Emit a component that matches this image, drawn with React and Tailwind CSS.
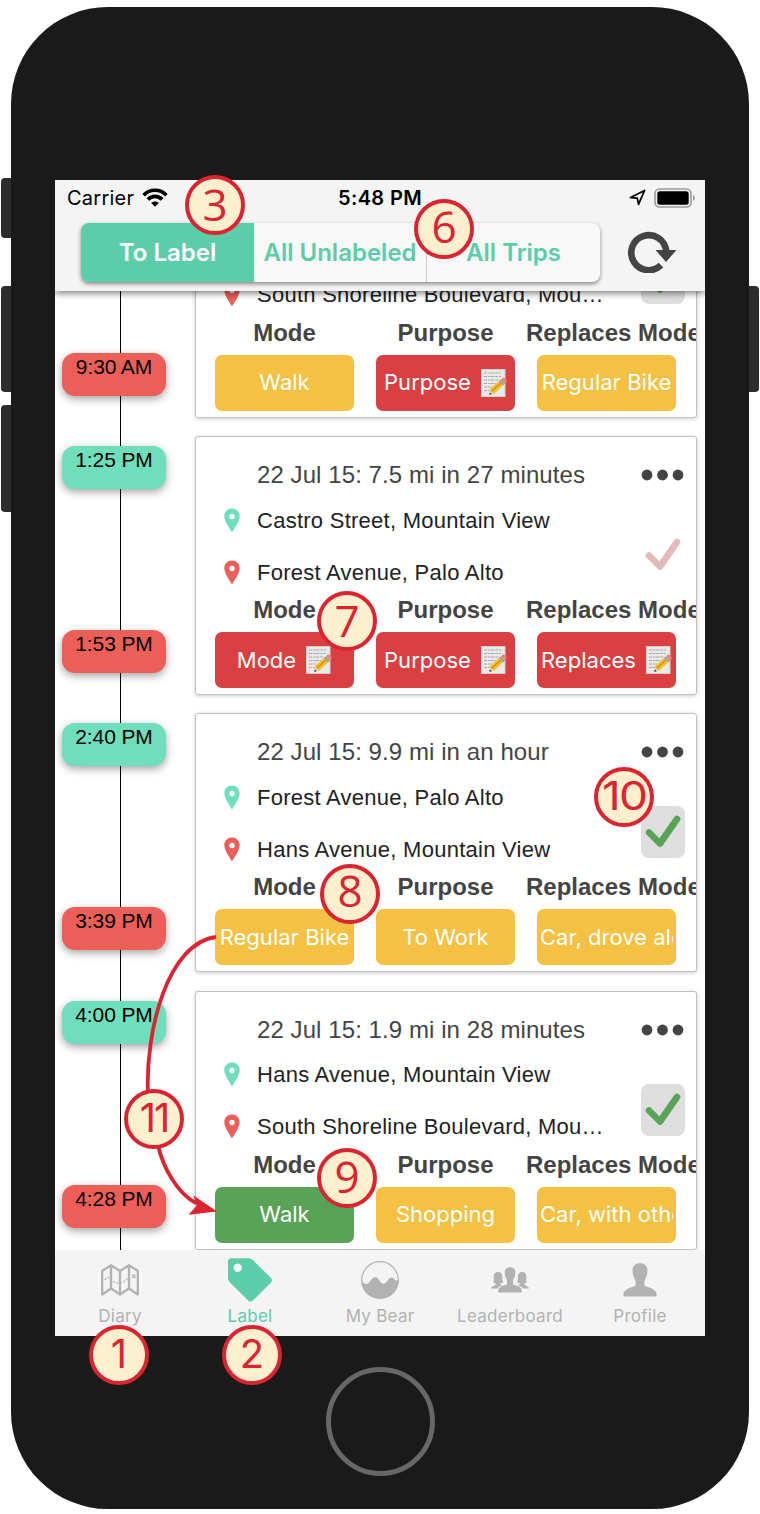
import React from "react";

const TONES = {
  yellow: "bg-[#f5c143]",
  red: "bg-[#da4042]",
  green: "bg-[#58a355]",
};

const TRIPS = [
  {
    title: "22 Jul 15: 1.9 mi in 28 minutes",
    from: "Hans Avenue, Mountain View",
    to: "South Shoreline Boulevard, Mou…",
    start: "9:02 AM",
    end: "9:30 AM",
    verified: true,
    labels: [
      { text: "Walk", tone: "yellow" },
      { text: "Purpose", tone: "red", memo: true },
      { text: "Regular Bike", tone: "yellow" },
    ],
  },
  {
    title: "22 Jul 15: 7.5 mi in 27 minutes",
    from: "Castro Street, Mountain View",
    to: "Forest Avenue, Palo Alto",
    start: "1:25 PM",
    end: "1:53 PM",
    verified: false,
    labels: [
      { text: "Mode", tone: "red", memo: true },
      { text: "Purpose", tone: "red", memo: true },
      { text: "Replaces", tone: "red", memo: true },
    ],
  },
  {
    title: "22 Jul 15: 9.9 mi in an hour",
    from: "Forest Avenue, Palo Alto",
    to: "Hans Avenue, Mountain View",
    start: "2:40 PM",
    end: "3:39 PM",
    verified: true,
    labels: [
      { text: "Regular Bike", tone: "yellow" },
      { text: "To Work", tone: "yellow" },
      { text: "Car, drove alone", tone: "yellow" },
    ],
  },
  {
    title: "22 Jul 15: 1.9 mi in 28 minutes",
    from: "Hans Avenue, Mountain View",
    to: "South Shoreline Boulevard, Mou…",
    start: "4:00 PM",
    end: "4:28 PM",
    verified: true,
    labels: [
      { text: "Walk", tone: "green" },
      { text: "Shopping", tone: "yellow" },
      { text: "Car, with others", tone: "yellow" },
    ],
  },
];

function Memo() {
  return (
    <svg viewBox="0 0 26 28" className="h-7 w-[26px] shrink-0">
      <rect x="0.5" y="0.5" width="23.5" height="27" fill="#e9e9e9" stroke="#cfcfcf" />
      <g stroke="#a2a2a2" strokeWidth="0.9" strokeDasharray="3 .8 2 .6 4 .9">
        <path d="M3 4h17M3 7.5h17M3 11h15M3 14.500h12M3 18h8M3 21.500h6" />
      </g>
      <path d="M8 21l1.500 4.800 5-1.300z" fill="#edcf9d" />
      <path d="M8 25.800l1-2.300 1.700 1.800z" fill="#333" />
      <path d="M8.500 20.500L19 11l4 4.500-9.500 9z" fill="#f3c02f" />
      <path d="M10.500 22.500L21 13" stroke="#d18d16" strokeWidth="1.300" />
      <path d="M18 12l2-1.700 4 4.500-2 1.700z" fill="#9fa5ad" />
      <path d="M20 10.300l1.500-1.500q1-.8 2.200.2l1.500 1.700q1 1.300 0 2.300L24 14.800z" fill="#ee8379" />
    </svg>
  );
}

function Pin({ className }) {
  return (
    <svg viewBox="0 0 16 25" className={`h-[25px] w-4 shrink-0 ${className}`}>
      <path
        fill="currentColor"
        fillRule="evenodd"
        d="M8 0.500C3.600.500.300 3.700.300 8c0 5.200 4.500 11 7.700 16.500C11.200 19 15.700 13.200 15.700 8 15.700 3.700 12.400.500 8 .500zM8 5.800a2.700 2.700 0 1 1 0 5.400 2.700 2.700 0 0 1 0-5.400z"
      />
    </svg>
  );
}

function Address({ children, pin }) {
  return (
    <div className="flex h-[52px] items-center">
      <Pin className={pin} />
      <span className="ml-[17px] text-[22px] tracking-[0.260px] whitespace-nowrap text-[#222]">{children}</span>
    </div>
  );
}

function TripCard({ trip }) {
  return (
    <div className="flex h-[259px] w-[502px] flex-col overflow-hidden rounded-[3px] border border-[#c2c2c2] bg-white shadow-[0_1px_4px_rgba(0,0,0,0.2)]">
      <div className="flex h-[161px] shrink-0 pr-[11px] pl-[28px]">
        <div className="min-w-0 flex-1">
          <div className="mt-[21px] h-[36px] pl-[33px] text-2xl leading-[34px] tracking-[0.08px] whitespace-nowrap text-[#444]">
            {trip.title}
          </div>
          <Address pin="text-[#6edebd]">{trip.from}</Address>
          <Address pin="text-[#ec5f59]">{trip.to}</Address>
        </div>
        <div className="flex w-11 flex-col">
          <svg viewBox="0 0 44 12" className="mt-[32px] h-3 w-11" fill="#444">
            <circle cx="6" cy="6" r="5.400" />
            <circle cx="21.500" cy="6" r="5.400" />
            <circle cx="37" cy="6" r="5.400" />
          </svg>
          <div
            className={`mt-[48px] flex h-[52px] w-11 items-center justify-center rounded-[8px] ${
              trip.verified ? "bg-[#dedede] text-[#58a355]" : "text-[#e2baba]"
            }`}
          >
            <svg viewBox="0 0 44 52" className="h-[52px] w-11">
              <path
                d="M8 26.500l11 11L36 13"
                fill="none"
                stroke="currentColor"
                strokeWidth="6.600"
                strokeLinecap="round"
                strokeLinejoin="round"
              />
            </svg>
          </div>
        </div>
      </div>
      <div className="ml-[8px] flex w-[484px] shrink-0">
        {["Mode", "Purpose", "Replaces Mode"].map((name, i) => (
          <div key={name} className="w-[161px] shrink-0">
            <div className="h-[34px] text-center text-2xl leading-[24px] font-bold whitespace-nowrap text-[#444]">
              {name}
            </div>
            <div
              className={`mx-[11px] flex h-14 items-center overflow-hidden rounded-[7px] px-[3px] ${
                TONES[trip.labels[i].tone]
              }`}
            >
              <div className="w-full min-w-0 overflow-hidden">
                <div className="mx-auto flex w-fit items-center gap-[10px] font-['Inter',sans-serif] text-[22px] tracking-[0.020px] whitespace-nowrap text-white">
                  {trip.labels[i].text}
                  {trip.labels[i].memo && <Memo />}
                </div>
              </div>
            </div>
          </div>
        ))}
      </div>
    </div>
  );
}

function TimePill({ children, className }) {
  return (
    <div
      className={`relative h-[43px] w-[104px] rounded-[13px] text-center text-[21px] leading-[28px] tracking-[-0.100px] text-black shadow-[0_3px_8px_rgba(0,0,0,0.36)] ${className}`}
    >
      {children}
    </div>
  );
}

function TripRow({ trip }) {
  return (
    <div className="flex h-[277.400px] shrink-0">
      <div className="relative flex w-[140px] shrink-0 flex-col pl-[7px]">
        <div className="absolute top-0 bottom-0 left-[65px] w-px bg-black" />
        <TimePill className="mt-[10px] bg-[#6edebd]">{trip.start}</TimePill>
        <TimePill className="mt-[141px] bg-[#ec5f59]">{trip.end}</TimePill>
      </div>
      <TripCard trip={trip} />
    </div>
  );
}

function StatusBar() {
  return (
    <div className="grid h-[35px] grid-cols-[1fr_auto_1fr] items-center px-3 font-['Inter',sans-serif] text-[20px] text-black">
      <div className="flex items-center gap-[8px] tracking-[0.250px]">
        Carrier
        <svg viewBox="0 0 26 19" className="h-[19px] w-[26px]">
          <g fill="none" stroke="#000" strokeWidth="3.600">
            <path d="M1.600 7.200C8 .600 18 .600 24.400 7.200" />
            <path d="M5.900 11.500c4-4.200 10.200-4.200 14.200 0" />
          </g>
          <path d="M13 18.800l-3.800-3.900c2.200-2 5.400-2 7.600 0z" />
        </svg>
      </div>
      <div className="font-semibold tracking-[0.350px]">5:48 PM</div>
      <div className="flex items-center justify-end gap-2">
        <svg viewBox="0 0 17 17" className="h-[17px] w-[17px]">
          <path
            d="M1.500 8.600L15.600 1.400 9.500 15.400 8.300 9.100z"
            fill="none"
            stroke="#000"
            strokeWidth="1.700"
            strokeLinejoin="round"
          />
        </svg>
        <svg viewBox="0 0 42 20" className="-mr-[3px] h-5 w-[42px]">
          <rect x="1" y="1" width="36" height="18" rx="4.500" fill="none" stroke="#999" strokeWidth="1.600" />
          <rect x="3.300" y="3.200" width="31.400" height="13.600" rx="2.500" />
          <path d="M39 7v6c2.400-1 2.400-5 0-6z" fill="#999" />
        </svg>
      </div>
    </div>
  );
}

function FilterBar() {
  return (
    <div className="flex items-start pt-[8px] pl-[26px]">
      <div className="grid h-[59px] w-[519px] grid-cols-3 overflow-hidden rounded-[8px] bg-[#f8f8f8] font-['Inter',sans-serif] text-2xl font-semibold whitespace-nowrap text-[#5ccda9] shadow-[0_2px_4px_rgba(0,0,0,0.450)]">
        <div className="flex items-center justify-center bg-[#5ccda9] text-white">To Label</div>
        <div className="flex items-center justify-center border-r border-[#ccc]">
          All Unlabeled
        </div>
        <div className="flex items-center justify-center">All Trips</div>
      </div>
      <svg viewBox="0 0 50 44" className="mt-[6px] ml-[27px] h-11 w-[50px]">
        <path d="M34 36.200A17.500 17.500 0 1 1 39.200 22" fill="none" stroke="#444" strokeWidth="6.600" />
        <path d="M28.500 21H49.500L39 33z" fill="#444" />
      </svg>
    </div>
  );
}

function MapIcon() {
  return (
    <svg viewBox="0 0 38 34" className="h-[34px] w-[38px]" fill="none" stroke="#b2b2b2">
      <path
        d="M1.200 8L10 2.200 19 8l9-5.800L36.800 8v23.500L28 25.500l-9 6-9-6-8.800 6zM10 2.200v23.300M19 8v23.500M28 2.200v23.300"
        strokeWidth="2.300"
        strokeLinejoin="round"
      />
      <path d="M4 17c2-4 4-3 6-.5s5 4 9 3.500 6-3 9-6" strokeWidth="1.200" strokeDasharray="2 1.600" />
      <path d="M31 11.500l3.500 3.500M34.500 11.500L31 15" strokeWidth="1.200" />
    </svg>
  );
}

function TagIcon() {
  return (
    <svg viewBox="0 0 44 44" className="h-11 w-11">
      <path
        fill="#5ccda9"
        fillRule="evenodd"
        d="M3.500.200H20.500Q23 .200 24.800 2L43 20Q45 22.200 43 24.400L24.800 42.600Q22.500 44.800 20.200 42.600L1.700 24.300Q0 22.600 0 20.300V3.700Q0 .200 3.500.200zM9.700 5.600a4.200 4.200 0 1 0 0 8.400 4.200 4.200 0 0 0 0-8.400z"
      />
    </svg>
  );
}

function BearIcon() {
  return (
    <svg viewBox="0 0 38 38" className="h-[38px] w-[38px]">
      <circle cx="19" cy="19" r="18.300" fill="none" stroke="#b2b2b2" strokeWidth="1.200" />
      <path
        fill="#b2b2b2"
        d="M.800 19.500C2.500 23 6 24.500 8.500 21 10.500 18 12 16.200 14.500 16.200c3.500 0 4.500 6.500 8 6.500 3.500 0 4.500-6.300 8-6.300 3 0 3.500 4.300 6.800 2.800.500 10-7 18.300-18.300 18.300S.300 29.500.800 19.500z"
      />
    </svg>
  );
}

function PeopleIcon() {
  return (
    <svg viewBox="0 0 38 26" className="h-[26px] w-[38px]" fill="#b2b2b2">
      <path d="M19 .300c3.600 0 5.500 2.100 5.300 5.700-.1 3.400-1.300 5.200-2.300 7.400v4c4.200 1.100 8.700 2.500 8.700 6V25.500H7.300v-2.100c0-3.500 4.500-4.900 8.700-6v-4c-1-2.200-2.200-4-2.300-7.400C13.500 2.400 15.400.300 19 .300z" />
      <path d="M7 5c3.300 0 4.300 2.300 4.300 5.200 0 2.500.2 3.600.8 5.200-1.200.8-3.200.4-3.100 1.100.1 1.200 1.600 1.200 2.200 1.700-2.600.9-4 1.500-4.800 3.300H0c.3-2.800 4.300-2.600 5-4.500.4-1.100-1.800-.6-2.700-1.600.6-1.700.4-3 .4-5.200C2.700 7.300 3.700 5 7 5z" />
      <path d="M31.200 5c-3.300 0-4.300 2.300-4.300 5.200 0 2.500-.2 3.600-.8 5.200 1.200.8 3.200.4 3.100 1.100-.1 1.200-1.600 1.200-2.200 1.700 2.600.9 4 1.500 4.800 3.300h6.200c-.3-2.800-4.300-2.600-5-4.500-.4-1.100 1.800-.6 2.700-1.600-.6-1.700-.4-3-.4-5.200C35.500 7.300 34.500 5 31.200 5z" />
    </svg>
  );
}

function PersonIcon() {
  return (
    <svg viewBox="0 0 34 34" className="h-[34px] w-[34px]" fill="#b2b2b2">
      <path d="M17 .300C22 .300 24.700 3.200 24.500 8c-.1 4.500-1.700 7-3 10v5C27 24.500 33.500 26.800 33.500 31v2.500H.500V31C.500 26.800 7 24.500 12.500 23v-5C11.200 15 9.600 12.500 9.500 8 9.300 3.200 12 .300 17 .300z" />
    </svg>
  );
}

const NAV = [
  { name: "Diary", Icon: MapIcon },
  { name: "Label", Icon: TagIcon, active: true },
  { name: "My Bear", Icon: BearIcon },
  { name: "Leaderboard", Icon: PeopleIcon },
  { name: "Profile", Icon: PersonIcon },
];

function NavBar() {
  return (
    <div className="grid h-[86px] shrink-0 grid-cols-5 bg-[#f4f4f4] font-['Inter',sans-serif] text-[17px] tracking-[0.250px]">
      {NAV.map(({ name, Icon, active }) => (
        <div key={name} className={`flex flex-col items-center ${active ? "text-[#5ccda9]" : "text-[#b2b2b2]"}`}>
          <div className="flex h-[60px] items-center justify-center">
            <Icon />
          </div>
          <div className="-mt-[4px] leading-5 whitespace-nowrap">{name}</div>
        </div>
      ))}
    </div>
  );
}

const BIG = "font-['Open_Sans',sans-serif] text-[44px]";
const WIDE = "font-['Inter',sans-serif] text-[40px]";

const CALLOUTS = [
  { n: "3", spot: "left-[185px] top-[175px]", face: BIG, nudge: "-translate-y-px" },
  { n: "6", spot: "left-[414px] top-[199px]", face: BIG, nudge: "-translate-y-[3px]" },
  { n: "7", spot: "left-[317px] top-[591px]", face: BIG, nudge: "-translate-y-px" },
  { n: "10", spot: "left-[594px] top-[767px]", face: WIDE, nudge: "-translate-y-px scale-x-[1.150] tracking-[-1.500px]" },
  { n: "8", spot: "left-[320px] top-[864px]", face: BIG, nudge: "-translate-y-[4px]" },
  { n: "11", spot: "left-[124px] top-[1089px]", face: WIDE, nudge: "-translate-y-px tracking-[-2px]" },
  { n: "9", spot: "left-[317px] top-[1148px]", face: BIG, nudge: "-translate-y-[2px]" },
  { n: "1", spot: "left-[89px] top-[1325px]", face: WIDE, nudge: "-translate-y-px" },
  { n: "2", spot: "left-[222px] top-[1325px]", face: WIDE, nudge: "-translate-y-px" },
];

function Callouts() {
  return (
    <div className="pointer-events-none absolute inset-0 z-20">
      <svg viewBox="0 0 760 1514" className="absolute inset-0 h-full w-full">
        <path
          d="M216 937C168 943 145 1030 148 1095M158 1145C163 1168 178 1194 196 1203"
          fill="none"
          stroke="#dc2430"
          strokeWidth="3.800"
        />
        <path d="M217 1211.500L193.500 1195.500 196.500 1206 188.500 1214.800z" fill="#dc2430" />
      </svg>
      {CALLOUTS.map(({ n, spot, face, nudge }) => (
        <div
          key={n}
          className={`absolute flex h-[60px] w-[60px] items-center justify-center rounded-full border-4 border-[#dc2430] bg-[#feefcf] leading-none text-[#dc2430] ${spot} ${face}`}
        >
          <span className={nudge}>{n}</span>
        </div>
      ))}
    </div>
  );
}

export default function App() {
  return (
    <div className="relative h-[1514px] w-[760px] overflow-hidden bg-white font-['Liberation_Sans',Arial,sans-serif]">
      <div className="absolute top-[178px] left-[1px] h-[60px] w-4 rounded-[4px] bg-[#2b2c2c]" />
      <div className="absolute top-[286px] left-[1px] h-[106px] w-4 rounded-[4px] bg-[#2b2c2c]" />
      <div className="absolute top-[405px] left-[1px] h-[107px] w-4 rounded-[4px] bg-[#2b2c2c]" />
      <div className="absolute top-[286px] left-[743px] h-[106px] w-4 rounded-[4px] bg-[#2b2c2c]" />
      <div className="relative mx-auto flex h-full w-[738px] flex-col pt-[7px] pb-[5px]">
        <div className="flex flex-1 flex-col items-center rounded-[97px] bg-[#1a1a1a] pt-[173px]">
          <div className="flex h-[1156px] w-[650px] shrink-0 flex-col overflow-hidden bg-white">
            <div className="relative z-10 h-[111px] shrink-0 bg-[#f4f4f4] shadow-[0_2px_7px_rgba(0,0,0,0.550)]">
              <StatusBar />
              <FilterBar />
            </div>
            <div className="h-[959px] shrink-0 overflow-hidden">
              <div className="-mt-[132.300px] flex flex-col">
                {TRIPS.map((trip) => (
                  <TripRow key={trip.end} trip={trip} />
                ))}
              </div>
            </div>
            <NavBar />
          </div>
          <div className="mt-[31px] h-[109px] w-[109px] rounded-full border-[5px] border-[#676767]" />
        </div>
      </div>
      <Callouts />
    </div>
  );
}
